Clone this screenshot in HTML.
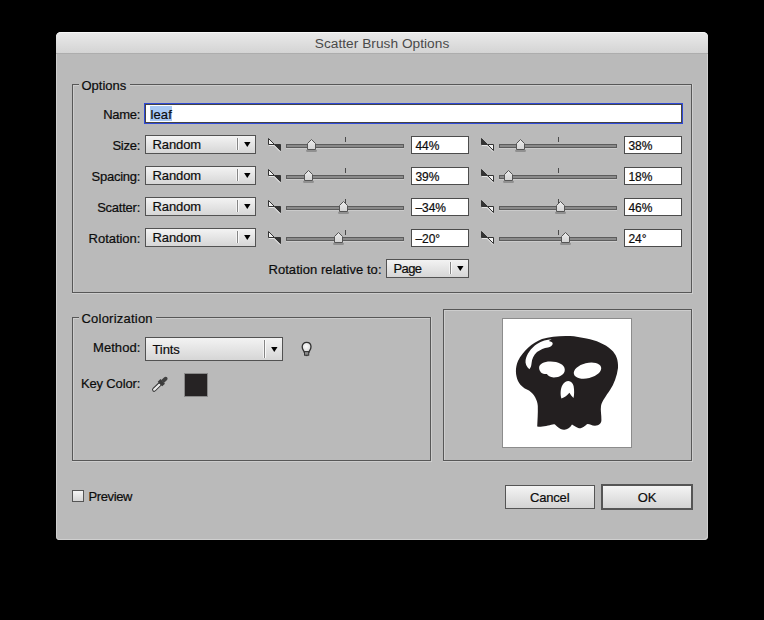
<!DOCTYPE html>
<html><head><meta charset="utf-8"><style>
*{box-sizing:border-box;margin:0;padding:0}
html,body{width:764px;height:620px;background:#000;overflow:hidden}
body{position:relative;font-family:"Liberation Sans",sans-serif;font-size:13px;color:#0c0c0c}
div,svg{position:absolute}
.t{white-space:nowrap;line-height:16px;height:16px;-webkit-text-stroke:0.2px currentColor}
.dd{border:1px solid #525252;background:linear-gradient(#f3f3f3,#d6d6d6)}
.sep{width:1px;background:#858585;box-shadow:1px 0 0 #fafafa,-1px 0 0 #f4f4f4}
.arr{width:0;height:0;border-left:4px solid transparent;border-right:4px solid transparent;border-top:5px solid #000}
.fld{background:#fff;border:1px solid #4c4c4c}
.trk{height:4px;background:#8a8a8a;border:1px solid #5c5c5c;box-shadow:0 1px 0 #cbcbcb}
.tick{width:1px;height:5px;background:#4a4a4a}
.gl{background:#575757}
.gh{background:#cdcdcd}
.btn{border:1px solid #555;background:linear-gradient(#f4f4f4,#d3d3d3)}
</style></head><body>
<div style="left:56px;top:32px;width:652px;height:508px;background:#bababa;border-radius:5px 5px 4px 4px;box-shadow:inset -1px -1px 0 #cfcfcf, inset 1px 0 0 #cfcfcf"></div>
<div style="left:56px;top:32px;width:652px;height:22px;border-radius:5px 5px 0 0;background:linear-gradient(#e9e9e9,#d4d4d4);border-top:1px solid #f7f7f7;border-bottom:1px solid #adadad"></div>
<div class="t" style="top:36px;font-size:13.7px;letter-spacing:0.03px;color:#4a4a4a;left:182px;width:400px;text-align:center;-webkit-text-stroke:0;">Scatter Brush Options</div>
<div class="gl" style="left:72px;top:84px;width:1px;height:209px"></div>
<div class="gh" style="left:73px;top:85px;width:1px;height:207px"></div>
<div class="gl" style="left:691px;top:84px;width:1px;height:209px"></div>
<div class="gh" style="left:692px;top:84px;width:1px;height:210px"></div>
<div class="gl" style="left:72px;top:292px;width:620px;height:1px"></div>
<div class="gh" style="left:72px;top:293px;width:621px;height:1px"></div>
<div class="gl" style="left:72px;top:84px;width:7px;height:1px"></div>
<div class="gh" style="left:73px;top:85px;width:6px;height:1px"></div>
<div class="gl" style="left:130px;top:84px;width:562px;height:1px"></div>
<div class="gh" style="left:130px;top:85px;width:561px;height:1px"></div>
<div class="t" style="top:78px;font-size:13px;left:81.5px;">Options</div>
<div class="gl" style="left:72px;top:317px;width:1px;height:144px"></div>
<div class="gh" style="left:73px;top:318px;width:1px;height:142px"></div>
<div class="gl" style="left:430px;top:317px;width:1px;height:144px"></div>
<div class="gh" style="left:431px;top:317px;width:1px;height:145px"></div>
<div class="gl" style="left:72px;top:460px;width:359px;height:1px"></div>
<div class="gh" style="left:72px;top:461px;width:360px;height:1px"></div>
<div class="gl" style="left:72px;top:317px;width:7px;height:1px"></div>
<div class="gh" style="left:73px;top:318px;width:6px;height:1px"></div>
<div class="gl" style="left:156px;top:317px;width:275px;height:1px"></div>
<div class="gh" style="left:156px;top:318px;width:274px;height:1px"></div>
<div class="t" style="top:311px;font-size:13px;letter-spacing:0.22px;left:81.5px;">Colorization</div>
<div class="gl" style="left:443px;top:309px;width:1px;height:152px"></div>
<div class="gh" style="left:444px;top:310px;width:1px;height:150px"></div>
<div class="gl" style="left:691px;top:309px;width:1px;height:152px"></div>
<div class="gh" style="left:692px;top:309px;width:1px;height:153px"></div>
<div class="gl" style="left:443px;top:460px;width:249px;height:1px"></div>
<div class="gh" style="left:443px;top:461px;width:250px;height:1px"></div>
<div class="gl" style="left:443px;top:309px;width:249px;height:1px"></div>
<div class="gh" style="left:444px;top:310px;width:247px;height:1px"></div>
<div class="t" style="top:107px;font-size:13px;letter-spacing:-0.3px;left:-160.00px;width:300px;text-align:right;">Name:</div>
<div style="left:144px;top:103px;width:539px;height:21px;border:1px solid #2f4ad8;background:#fff"><div style="left:0;top:0;right:0;bottom:0;border:1px solid #444"></div></div>
<div style="left:150px;top:106px;width:22px;height:15px;background:#a9c9f4"></div>
<div class="t" style="top:107px;font-size:13px;letter-spacing:0.1px;left:150.5px;">leaf</div>
<svg style="left:0;top:0" width="0" height="0"><defs><linearGradient id="tg" x1="0" y1="0" x2="0" y2="1"><stop offset="0" stop-color="#ececec"/><stop offset="1" stop-color="#d4d4d4"/></linearGradient></defs></svg>
<div class="t" style="top:138px;font-size:13px;letter-spacing:-0.25px;left:-159.95px;width:300px;text-align:right;">Size:</div>
<div class="dd" style="left:145px;top:135px;width:111px;height:19px"></div>
<div class="sep" style="left:237px;top:138px;height:12px"></div>
<svg style="left:244px;top:142px" width="7" height="5" viewBox="0 0 7 5"><path d="M0.1 0 H6.5 L3.3 5 Z" fill="#000"/></svg>
<div class="t" style="top:137px;font-size:13px;letter-spacing:-0.1px;left:152.5px;">Random</div>
<svg style="left:268px;top:138px" width="14" height="14" viewBox="0 0 14 14"><path d="M0.5 0.5 L0.5 6.5 L6.5 6.5 Z" fill="#f2f2f2" stroke="#333" stroke-width="1"/><path d="M6.5 6.5 L12.5 6.5 L12.5 12.5 Z" fill="#333" stroke="#333" stroke-width="1"/><path d="M1 7.5 L6 7.5 L12 13.5" fill="none" stroke="#e6e6e6" stroke-width="1"/></svg>
<div class="tick" style="left:345px;top:137px"></div>
<div class="trk" style="left:286px;top:144px;width:118px"></div>
<svg style="left:306px;top:139px" width="11" height="14" viewBox="0 0 11 14"><path d="M0 11 L11 11 L10.5 13 L0.5 13 Z" fill="#8c8c8c" opacity="0.9"/><path d="M1.5 10.5 L1.5 4.5 L5.5 0.5 L9.5 4.5 L9.5 10.5 Z" fill="url(#tg)" stroke="#555" stroke-width="1"/></svg>
<div class="fld" style="left:411px;top:136px;width:58px;height:18px"></div>
<div class="t" style="top:138px;font-size:12px;letter-spacing:-0.1px;left:415.5px;">44%</div>
<svg style="left:481px;top:138px" width="14" height="14" viewBox="0 0 14 14"><path d="M0.5 0.5 L0.5 6.5 L6.5 6.5 Z" fill="#333" stroke="#333" stroke-width="1"/><path d="M6.5 6.5 L12.5 6.5 L12.5 12.5 Z" fill="#f2f2f2" stroke="#333" stroke-width="1"/><path d="M1 7.5 L6 7.5 L12 13.5" fill="none" stroke="#e6e6e6" stroke-width="1"/></svg>
<div class="tick" style="left:558px;top:137px"></div>
<div class="trk" style="left:499px;top:144px;width:118px"></div>
<svg style="left:515px;top:139px" width="11" height="14" viewBox="0 0 11 14"><path d="M0 11 L11 11 L10.5 13 L0.5 13 Z" fill="#8c8c8c" opacity="0.9"/><path d="M1.5 10.5 L1.5 4.5 L5.5 0.5 L9.5 4.5 L9.5 10.5 Z" fill="url(#tg)" stroke="#555" stroke-width="1"/></svg>
<div class="fld" style="left:624px;top:136px;width:58px;height:18px"></div>
<div class="t" style="top:138px;font-size:12px;letter-spacing:-0.1px;left:628.5px;">38%</div>
<div class="t" style="top:169px;font-size:13px;letter-spacing:-0.27px;left:-159.97px;width:300px;text-align:right;">Spacing:</div>
<div class="dd" style="left:145px;top:166px;width:111px;height:19px"></div>
<div class="sep" style="left:237px;top:169px;height:12px"></div>
<svg style="left:244px;top:173px" width="7" height="5" viewBox="0 0 7 5"><path d="M0.1 0 H6.5 L3.3 5 Z" fill="#000"/></svg>
<div class="t" style="top:168px;font-size:13px;letter-spacing:-0.1px;left:152.5px;">Random</div>
<svg style="left:268px;top:169px" width="14" height="14" viewBox="0 0 14 14"><path d="M0.5 0.5 L0.5 6.5 L6.5 6.5 Z" fill="#f2f2f2" stroke="#333" stroke-width="1"/><path d="M6.5 6.5 L12.5 6.5 L12.5 12.5 Z" fill="#333" stroke="#333" stroke-width="1"/><path d="M1 7.5 L6 7.5 L12 13.5" fill="none" stroke="#e6e6e6" stroke-width="1"/></svg>
<div class="tick" style="left:345px;top:168px"></div>
<div class="trk" style="left:286px;top:175px;width:118px"></div>
<svg style="left:303px;top:170px" width="11" height="14" viewBox="0 0 11 14"><path d="M0 11 L11 11 L10.5 13 L0.5 13 Z" fill="#8c8c8c" opacity="0.9"/><path d="M1.5 10.5 L1.5 4.5 L5.5 0.5 L9.5 4.5 L9.5 10.5 Z" fill="url(#tg)" stroke="#555" stroke-width="1"/></svg>
<div class="fld" style="left:411px;top:167px;width:58px;height:18px"></div>
<div class="t" style="top:169px;font-size:12px;letter-spacing:-0.1px;left:415.5px;">39%</div>
<svg style="left:481px;top:169px" width="14" height="14" viewBox="0 0 14 14"><path d="M0.5 0.5 L0.5 6.5 L6.5 6.5 Z" fill="#333" stroke="#333" stroke-width="1"/><path d="M6.5 6.5 L12.5 6.5 L12.5 12.5 Z" fill="#f2f2f2" stroke="#333" stroke-width="1"/><path d="M1 7.5 L6 7.5 L12 13.5" fill="none" stroke="#e6e6e6" stroke-width="1"/></svg>
<div class="tick" style="left:558px;top:168px"></div>
<div class="trk" style="left:499px;top:175px;width:118px"></div>
<svg style="left:503px;top:170px" width="11" height="14" viewBox="0 0 11 14"><path d="M0 11 L11 11 L10.5 13 L0.5 13 Z" fill="#8c8c8c" opacity="0.9"/><path d="M1.5 10.5 L1.5 4.5 L5.5 0.5 L9.5 4.5 L9.5 10.5 Z" fill="url(#tg)" stroke="#555" stroke-width="1"/></svg>
<div class="fld" style="left:624px;top:167px;width:58px;height:18px"></div>
<div class="t" style="top:169px;font-size:12px;letter-spacing:-0.1px;left:628.5px;">18%</div>
<div class="t" style="top:200px;font-size:13px;letter-spacing:-0.24px;left:-159.94px;width:300px;text-align:right;">Scatter:</div>
<div class="dd" style="left:145px;top:197px;width:111px;height:19px"></div>
<div class="sep" style="left:237px;top:200px;height:12px"></div>
<svg style="left:244px;top:204px" width="7" height="5" viewBox="0 0 7 5"><path d="M0.1 0 H6.5 L3.3 5 Z" fill="#000"/></svg>
<div class="t" style="top:199px;font-size:13px;letter-spacing:-0.1px;left:152.5px;">Random</div>
<svg style="left:268px;top:200px" width="14" height="14" viewBox="0 0 14 14"><path d="M0.5 0.5 L0.5 6.5 L6.5 6.5 Z" fill="#f2f2f2" stroke="#333" stroke-width="1"/><path d="M6.5 6.5 L12.5 6.5 L12.5 12.5 Z" fill="#333" stroke="#333" stroke-width="1"/><path d="M1 7.5 L6 7.5 L12 13.5" fill="none" stroke="#e6e6e6" stroke-width="1"/></svg>
<div class="tick" style="left:345px;top:199px"></div>
<div class="trk" style="left:286px;top:206px;width:118px"></div>
<svg style="left:338px;top:201px" width="11" height="14" viewBox="0 0 11 14"><path d="M0 11 L11 11 L10.5 13 L0.5 13 Z" fill="#8c8c8c" opacity="0.9"/><path d="M1.5 10.5 L1.5 4.5 L5.5 0.5 L9.5 4.5 L9.5 10.5 Z" fill="url(#tg)" stroke="#555" stroke-width="1"/></svg>
<div class="fld" style="left:411px;top:198px;width:58px;height:18px"></div>
<div class="t" style="top:200px;font-size:12px;letter-spacing:-0.1px;left:415.5px;">&#8211;34%</div>
<svg style="left:481px;top:200px" width="14" height="14" viewBox="0 0 14 14"><path d="M0.5 0.5 L0.5 6.5 L6.5 6.5 Z" fill="#333" stroke="#333" stroke-width="1"/><path d="M6.5 6.5 L12.5 6.5 L12.5 12.5 Z" fill="#f2f2f2" stroke="#333" stroke-width="1"/><path d="M1 7.5 L6 7.5 L12 13.5" fill="none" stroke="#e6e6e6" stroke-width="1"/></svg>
<div class="tick" style="left:558px;top:199px"></div>
<div class="trk" style="left:499px;top:206px;width:118px"></div>
<svg style="left:555px;top:201px" width="11" height="14" viewBox="0 0 11 14"><path d="M0 11 L11 11 L10.5 13 L0.5 13 Z" fill="#8c8c8c" opacity="0.9"/><path d="M1.5 10.5 L1.5 4.5 L5.5 0.5 L9.5 4.5 L9.5 10.5 Z" fill="url(#tg)" stroke="#555" stroke-width="1"/></svg>
<div class="fld" style="left:624px;top:198px;width:58px;height:18px"></div>
<div class="t" style="top:200px;font-size:12px;letter-spacing:-0.1px;left:628.5px;">46%</div>
<div class="t" style="top:231px;font-size:13px;letter-spacing:-0.04px;left:-159.74px;width:300px;text-align:right;">Rotation:</div>
<div class="dd" style="left:145px;top:228px;width:111px;height:19px"></div>
<div class="sep" style="left:237px;top:231px;height:12px"></div>
<svg style="left:244px;top:235px" width="7" height="5" viewBox="0 0 7 5"><path d="M0.1 0 H6.5 L3.3 5 Z" fill="#000"/></svg>
<div class="t" style="top:230px;font-size:13px;letter-spacing:-0.1px;left:152.5px;">Random</div>
<svg style="left:268px;top:231px" width="14" height="14" viewBox="0 0 14 14"><path d="M0.5 0.5 L0.5 6.5 L6.5 6.5 Z" fill="#f2f2f2" stroke="#333" stroke-width="1"/><path d="M6.5 6.5 L12.5 6.5 L12.5 12.5 Z" fill="#333" stroke="#333" stroke-width="1"/><path d="M1 7.5 L6 7.5 L12 13.5" fill="none" stroke="#e6e6e6" stroke-width="1"/></svg>
<div class="tick" style="left:345px;top:230px"></div>
<div class="trk" style="left:286px;top:237px;width:118px"></div>
<svg style="left:333px;top:232px" width="11" height="14" viewBox="0 0 11 14"><path d="M0 11 L11 11 L10.5 13 L0.5 13 Z" fill="#8c8c8c" opacity="0.9"/><path d="M1.5 10.5 L1.5 4.5 L5.5 0.5 L9.5 4.5 L9.5 10.5 Z" fill="url(#tg)" stroke="#555" stroke-width="1"/></svg>
<div class="fld" style="left:411px;top:229px;width:58px;height:18px"></div>
<div class="t" style="top:231px;font-size:12px;letter-spacing:-0.1px;left:415.5px;">&#8211;20&#176;</div>
<svg style="left:481px;top:231px" width="14" height="14" viewBox="0 0 14 14"><path d="M0.5 0.5 L0.5 6.5 L6.5 6.5 Z" fill="#333" stroke="#333" stroke-width="1"/><path d="M6.5 6.5 L12.5 6.5 L12.5 12.5 Z" fill="#f2f2f2" stroke="#333" stroke-width="1"/><path d="M1 7.5 L6 7.5 L12 13.5" fill="none" stroke="#e6e6e6" stroke-width="1"/></svg>
<div class="tick" style="left:558px;top:230px"></div>
<div class="trk" style="left:499px;top:237px;width:118px"></div>
<svg style="left:560px;top:232px" width="11" height="14" viewBox="0 0 11 14"><path d="M0 11 L11 11 L10.5 13 L0.5 13 Z" fill="#8c8c8c" opacity="0.9"/><path d="M1.5 10.5 L1.5 4.5 L5.5 0.5 L9.5 4.5 L9.5 10.5 Z" fill="url(#tg)" stroke="#555" stroke-width="1"/></svg>
<div class="fld" style="left:624px;top:229px;width:58px;height:18px"></div>
<div class="t" style="top:231px;font-size:12px;letter-spacing:-0.1px;left:628.5px;">24&#176;</div>
<div class="t" style="top:262px;font-size:13px;letter-spacing:0.05px;left:81.55px;width:300px;text-align:right;">Rotation relative to:</div>
<div class="dd" style="left:386px;top:259px;width:83px;height:19px"></div>
<div class="sep" style="left:450px;top:262px;height:12px"></div>
<svg style="left:457px;top:266px" width="7" height="5" viewBox="0 0 7 5"><path d="M0.1 0 H6.5 L3.3 5 Z" fill="#000"/></svg>
<div class="t" style="top:261px;font-size:13px;letter-spacing:-0.6px;left:393.5px;">Page</div>
<div class="t" style="top:340px;font-size:13px;letter-spacing:0.05px;left:-159.65px;width:300px;text-align:right;">Method:</div>
<div class="dd" style="left:145px;top:337px;width:138px;height:24px"></div>
<div class="sep" style="left:264px;top:340px;height:18px"></div>
<svg style="left:271px;top:347px" width="7" height="5" viewBox="0 0 7 5"><path d="M0.1 0 H6.5 L3.3 5 Z" fill="#000"/></svg>
<div class="t" style="top:342px;font-size:13px;letter-spacing:-0.1px;left:152.5px;">Tints</div>
<div class="t" style="top:376px;font-size:13px;letter-spacing:-0.15px;left:-159.85px;width:300px;text-align:right;">Key Color:</div>
<div style="left:184px;top:373px;width:24px;height:24px;background:#262324;border:1px solid #8a8a8a"></div>
<svg style="left:148px;top:374px" width="24" height="22" viewBox="0 0 24 22"><g transform="translate(4.8 17) rotate(-44)"><path d="M0.3 0 C0.3 -1 1 -1.6 2 -1.6 L10.5 -1.6 L10.5 1.6 L2 1.6 C1 1.6 0.3 1 0.3 0 Z" fill="#ececec" stroke="#333" stroke-width="1"/><rect x="10" y="-3.2" width="3.8" height="6.4" fill="#3a3a3a"/><path d="M13.5 -2 L17.5 -2 C19 -2 19.8 -1 19.8 0 C19.8 1 19 2 17.5 2 L13.5 2 Z" fill="#404040"/></g></svg>
<svg style="left:300px;top:340px" width="14" height="18" viewBox="0 0 14 18"><defs><radialGradient id="bg" cx="0.45" cy="0.4" r="0.6"><stop offset="0" stop-color="#fafafa"/><stop offset="1" stop-color="#d8d8d8"/></radialGradient></defs><path d="M4.3 12.3 C4 10.8 2.2 9.8 2.2 6.8 C2.2 4 4.2 2.3 6.6 2.3 C9 2.3 11 4 11 6.8 C11 9.8 9.2 10.8 8.9 12.3 Z" fill="url(#bg)" stroke="#303030" stroke-width="1.3"/><rect x="4.5" y="11.6" width="4.2" height="3.6" fill="#8a8a8a" stroke="#333" stroke-width="1"/><rect x="5.6" y="15.2" width="2" height="0.9" fill="#333"/></svg>
<div style="left:502px;top:318px;width:130px;height:130px;background:#fff;border:1px solid #8c8c8c"></div>
<svg style="left:502px;top:318px" width="130" height="130" viewBox="0 0 130 130"><path fill="#231f20" d="M68 18 C58 17.6 48 18.6 40 21 C30 25 21 33 16 43 C13 50 13.5 57 16 63 C18.5 68 23 71 27 72.5 C32 76 35.5 82 35.8 88 C36 96 35.5 102 35.2 108.4 C38 108.8 42 108.8 46 107.6 C49 107 51 105.8 53 106.4 C55 108 57 111 62 111.7 C65 111.9 68 110 70 106.6 C72 108 74.5 109.5 77 110.2 C81 110.4 83 107.5 85 106.2 C87 105.4 89 107.6 93 107.8 C97 107.5 99.5 105.5 99.4 102 C99.6 97 98.3 92 99 88 C100 83 104 78 108 72 C112 66 115 58 116 50 C116.5 42 114 36 109.5 32 C103 26 94 22.5 84.5 20.6 C79 19.3 73 18.2 68 18 Z"/><path fill="#fff" d="M27.4 51.2 C24.5 49 23 45.5 23.6 42 C24.5 36.5 29 30 35 26 C39.5 23 45 21.4 49.7 21.2 C48.5 22 47 22.5 46.8 23.1 C49 23.5 51 24.5 50.7 26 C50 28 48.5 28.8 46 29.4 C42 30 38.5 31.5 35 34 C31.5 37 30 41 29.6 45 C29.3 47.5 29 49.5 27.4 51.2 Z"/><path fill="#fff" d="M37.1 49.8 C37 46 42 43.4 48.7 43.5 C56 43.6 62.8 46.5 62.8 51.7 C62.8 56.5 57.5 59.5 51.6 59.4 C48 59.3 46 57.5 44.9 56 C43 56.2 40.5 55.8 39 54.4 C37.8 53.2 37.1 51.5 37.1 49.8 Z"/><ellipse fill="#fff" cx="85.5" cy="52.6" rx="14" ry="7.6" transform="rotate(-14 85.5 52.6)"/><path fill="#fff" d="M59.4 80.5 C58.3 77 58.2 71 60.5 67 C62 64.2 64.3 62.9 66.4 62.9 C69 63 70.8 65 71.6 68 C72.4 72 72.3 77 71.5 80.1 C69.8 78.5 68.5 76.5 67.4 74.7 C65.5 77 62.5 79.5 59.4 80.5 Z"/></svg>
<div style="left:72px;top:490px;width:12px;height:12px;border:1px solid #555;background:linear-gradient(#f5f5f5,#d5d5d5)"></div>
<div class="t" style="top:489px;font-size:13px;letter-spacing:-0.4px;left:88.6px;">Preview</div>
<div class="btn" style="left:505px;top:485px;width:90px;height:24px"></div>
<div class="t" style="top:490px;font-size:13px;letter-spacing:-0.2px;left:349.70000000000005px;width:400px;text-align:center;">Cancel</div>
<div class="btn" style="left:601px;top:484px;width:92px;height:26px;border:2px solid #555"></div>
<div class="t" style="top:490px;font-size:13px;letter-spacing:-0.1px;left:447px;width:400px;text-align:center;">OK</div>
</body></html>
